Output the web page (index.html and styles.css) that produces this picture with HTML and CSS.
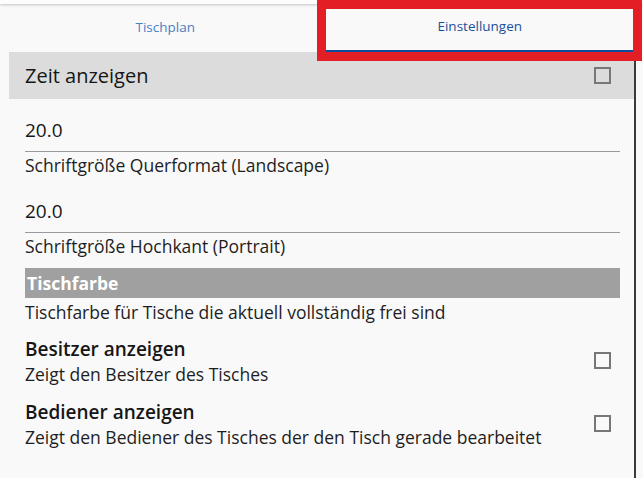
FILE: index.html
```html
<!DOCTYPE html>
<html lang="de">
<head>
<meta charset="utf-8">
<title>Einstellungen</title>
<link rel="stylesheet" href="styles.css">
</head>
<body>
<div class="appbar"></div>
<div class="frame">
  <nav class="tabs">
    <div class="tab">Tischplan</div>
    <div class="tab tab-active">Einstellungen</div>
  </nav>
  <div class="band">
    <span class="band-title">Zeit anzeigen</span>
    <span class="checkbox"></span>
  </div>
  <div class="body">
    <div class="field">20.0</div>
    <div class="desc">Schriftgröße Querformat (Landscape)</div>
    <div class="field">20.0</div>
    <div class="desc">Schriftgröße Hochkant (Portrait)</div>
    <div class="section">Tischfarbe</div>
    <div class="desc">Tischfarbe für Tische die aktuell vollständig frei sind</div>
    <div class="row row-first">
      <div class="row-text">
        <div class="row-title">Besitzer anzeigen</div>
        <div class="row-desc">Zeigt den Besitzer des Tisches</div>
      </div>
      <span class="checkbox"></span>
    </div>
    <div class="row">
      <div class="row-text">
        <div class="row-title">Bediener anzeigen</div>
        <div class="row-desc">Zeigt den Bediener des Tisches der den Tisch gerade bearbeitet</div>
      </div>
      <span class="checkbox"></span>
    </div>
  </div>
</div>
<div class="highlight"></div>
</body>
</html>
```

FILE: styles.css
```css
html, body {
  margin: 0;
  padding: 0;
  background: #f9f9f9;
  font-family: "Open Sans", "Noto Sans", sans-serif;
  color: #161616;
  height: 100%;
  overflow: hidden;
}

.appbar {
  height: 4px;
  background: #fdfdfd;
  box-shadow: 0 1px 3px rgba(0, 0, 0, 0.22);
  position: relative;
  z-index: 1;
}

.frame {
  margin-left: 9px;
  width: 627px;
  border-right: 2px solid #3a3a3a;
  min-height: 474px;
  box-sizing: border-box;
}

.tabs {
  display: grid;
  grid-template-columns: 1fr 1fr;
  height: 48px;
}

.tab {
  display: flex;
  align-items: center;
  justify-content: center;
  font-size: 13.5px;
  font-weight: 500;
  color: #4a80c4;
  padding-bottom: 3px;
  box-sizing: border-box;
}

.tab-active {
  color: #1a4f9e;
  border-bottom: 2px solid #0d4c9c;
  margin-left: 4px;
}

.band {
  height: 47px;
  background: #dcdcdc;
  display: flex;
  align-items: center;
  justify-content: space-between;
  padding: 0 23px 0 16px;
}

.band-title {
  font-size: 20px;
  line-height: 47px;
  color: #161616;
}

.checkbox {
  width: 17px;
  height: 17px;
  border: 2px solid #777;
  box-sizing: border-box;
  flex: none;
}

.body {
  padding: 0 14px 0 16px;
}

.field {
  font-size: 19px;
  line-height: 24px;
  padding: 19px 0 9px;
  border-bottom: 1px solid #9a9a9a;
  color: #161616;
}

.desc {
  font-size: 17.5px;
  line-height: 22px;
  padding: 2px 0 4px;
  color: #1e1e1e;
}

.section {
  margin-top: 7px;
  height: 30px;
  line-height: 30px;
  background: #a0a0a0;
  color: #fff;
  font-weight: 700;
  font-size: 17.5px;
  padding-left: 2px;
}

.section + .desc {
  padding-top: 3px;
}

.row {
  display: flex;
  align-items: center;
  justify-content: space-between;
  padding-right: 9px;
  margin-top: 15px;
}

.row-first {
  margin-top: 10px;
}

.row .checkbox {
  margin-bottom: 2px;
}

.row-title {
  font-size: 19px;
  font-weight: 600;
  line-height: 24px;
  color: #161616;
}

.row-desc {
  font-size: 17.5px;
  line-height: 22px;
  margin-top: 2px;
  color: #1e1e1e;
}

.highlight {
  position: absolute;
  left: 317px;
  top: 0;
  width: 325px;
  height: 61px;
  border: 9px solid #e31e24;
  box-sizing: border-box;
  z-index: 2;
}
```
